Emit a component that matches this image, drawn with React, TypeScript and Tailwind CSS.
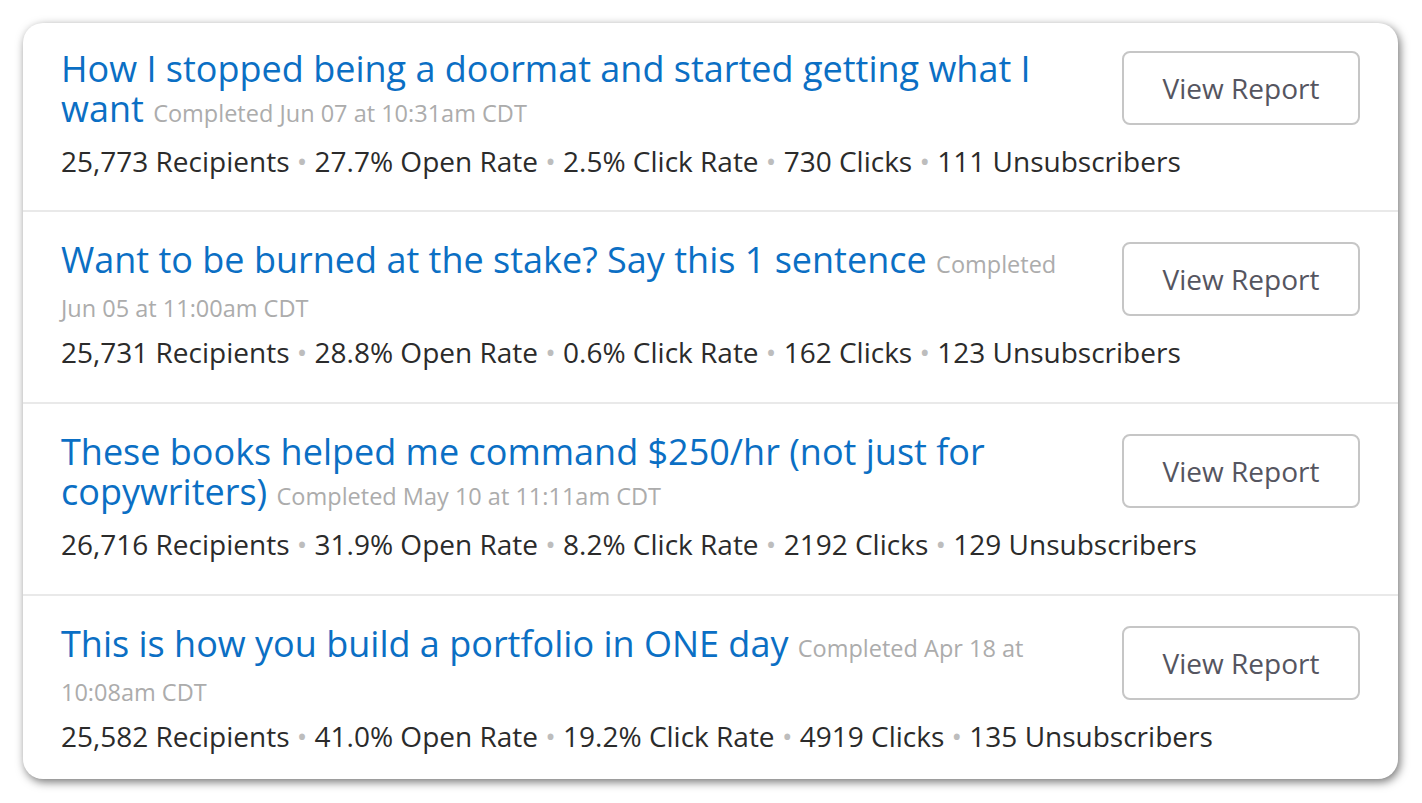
import React from "react";

type Row = {
  title: string;
  completed: string;
  stats: string[];
  pad: string;
};

const rows: Row[] = [
  {
    title: "How I stopped being a doormat and started getting what I want",
    completed: "Completed Jun 07 at 10:31am CDT",
    stats: ["25,773 Recipients", "27.7% Open Rate", "2.5% Click Rate", "730 Clicks", "111 Unsubscribers"],
    pad: "pt-[26px] pb-[31px]",
  },
  {
    title: "Want to be burned at the stake? Say this 1 sentence",
    completed: "Completed Jun 05 at 11:00am CDT",
    stats: ["25,731 Recipients", "28.8% Open Rate", "0.6% Click Rate", "162 Clicks", "123 Unsubscribers"],
    pad: "pt-[28px] pb-[32px] border-t-2 border-[#e9e9e9]",
  },
  {
    title: "These books helped me command $250/hr (not just for copywriters)",
    completed: "Completed May 10 at 11:11am CDT",
    stats: ["26,716 Recipients", "31.9% Open Rate", "8.2% Click Rate", "2192 Clicks", "129 Unsubscribers"],
    pad: "pt-[28px] pb-[32px] border-t-2 border-[#e9e9e9]",
  },
  {
    title: "This is how you build a portfolio in ONE day",
    completed: "Completed Apr 18 at 10:08am CDT",
    stats: ["25,582 Recipients", "41.0% Open Rate", "19.2% Click Rate", "4919 Clicks", "135 Unsubscribers"],
    pad: "pt-[28px] pb-[25px] border-t-2 border-[#e9e9e9]",
  },
];

export default function App() {
  return (
    <div
      className="w-[1422px] h-[803px] bg-white pt-[23px] pl-[23px]"
      style={{ fontFamily: '"Open Sans", "Noto Sans", sans-serif' }}
    >
      <div className="w-[1375px] h-[756px] bg-white rounded-[20px] overflow-hidden shadow-[2px_3px_10px_rgba(0,0,0,0.55)]">
        {rows.map((r, i) => (
          <div key={i} className={`${r.pad} pl-[38px] pr-[38px]`}>
            <div className="flex items-start">
              <div className="flex-1 text-[36px] leading-[40px] h-[80px] text-[#0b6fc4]">
                <span>{r.title} </span>
                <span className="text-[23.5px] text-[#acacac]">{r.completed}</span>
              </div>
              <button className="ml-[35px] mt-[2px] w-[238px] h-[74px] border-2 border-[#c6c6c6] rounded-[8px] bg-white text-[28px] text-[#555560] flex items-center justify-center">
                View Report
              </button>
            </div>
            <div className="mt-[14px] text-[28px] leading-[36px] text-[#2b2b2b] whitespace-nowrap">
              {r.stats.map((s, j) => (
                <React.Fragment key={j}>
                  {j > 0 && <span className="text-[#bdbdbd]"> • </span>}
                  <span>{s}</span>
                </React.Fragment>
              ))}
            </div>
          </div>
        ))}
      </div>
    </div>
  );
}
